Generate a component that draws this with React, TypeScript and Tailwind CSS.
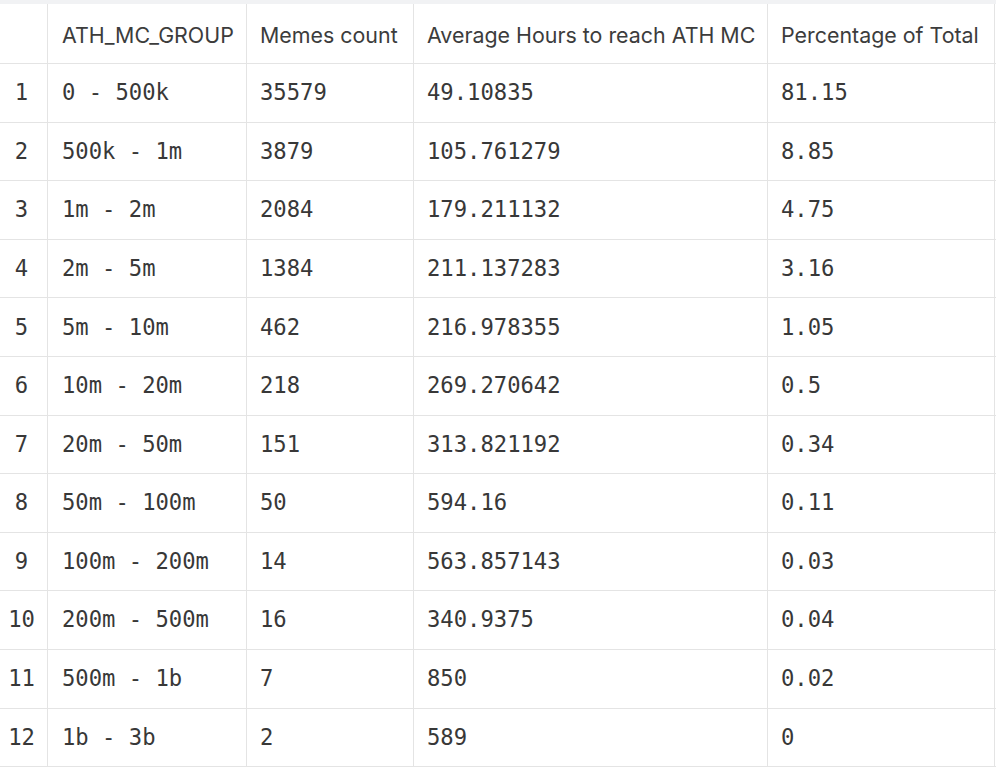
import React from "react";

const rows: [string, string, string, string][] = [
  ["0 - 500k", "35579", "49.10835", "81.15"],
  ["500k - 1m", "3879", "105.761279", "8.85"],
  ["1m - 2m", "2084", "179.211132", "4.75"],
  ["2m - 5m", "1384", "211.137283", "3.16"],
  ["5m - 10m", "462", "216.978355", "1.05"],
  ["10m - 20m", "218", "269.270642", "0.5"],
  ["20m - 50m", "151", "313.821192", "0.34"],
  ["50m - 100m", "50", "594.16", "0.11"],
  ["100m - 200m", "14", "563.857143", "0.03"],
  ["200m - 500m", "16", "340.9375", "0.04"],
  ["500m - 1b", "7", "850", "0.02"],
  ["1b - 3b", "2", "589", "0"],
];

const grid = "grid grid-cols-[48px_199px_167px_354px_227px]";

export default function App() {
  return (
    <div className="w-[996px] h-[768px] bg-white overflow-hidden">
      <div className="h-[4px] bg-[#f1f2f4]" />
      <div className={`${grid} h-[60px] border-b border-[#e4e4e4] text-[21.4px] text-[#3c3c3c] font-['Inter',sans-serif]`}>
        <div className="border-r border-[#e4e4e4]" />
        <div className="border-r border-[#e4e4e4] flex items-center pl-[14px] pt-[3px]">ATH_MC_GROUP</div>
        <div className="border-r border-[#e4e4e4] flex items-center pl-[13px] pt-[3px]">Memes count</div>
        <div className="border-r border-[#e4e4e4] flex items-center pl-[13px] pt-[3px] whitespace-nowrap">Average Hours to reach ATH MC</div>
        <div className="border-r border-[#e4e4e4] flex items-center pl-[13px] pt-[3px] whitespace-nowrap">Percentage of Total</div>
      </div>
      {rows.map((r, i) => (
        <div
          key={i}
          className={`${grid} h-[58.6px] border-b border-[#e4e4e4] text-[22.2px] text-[#383838] font-['DejaVu_Sans_Mono',monospace]`}
        >
          <div className="border-r border-[#e4e4e4] flex items-center justify-center pr-[4px]">{i + 1}</div>
          <div className="border-r border-[#e4e4e4] flex items-center pl-[14px] whitespace-pre">{r[0]}</div>
          <div className="border-r border-[#e4e4e4] flex items-center pl-[13px]">{r[1]}</div>
          <div className="border-r border-[#e4e4e4] flex items-center pl-[13px]">{r[2]}</div>
          <div className="border-r border-[#e4e4e4] flex items-center pl-[13px]">{r[3]}</div>
        </div>
      ))}
    </div>
  );
}
